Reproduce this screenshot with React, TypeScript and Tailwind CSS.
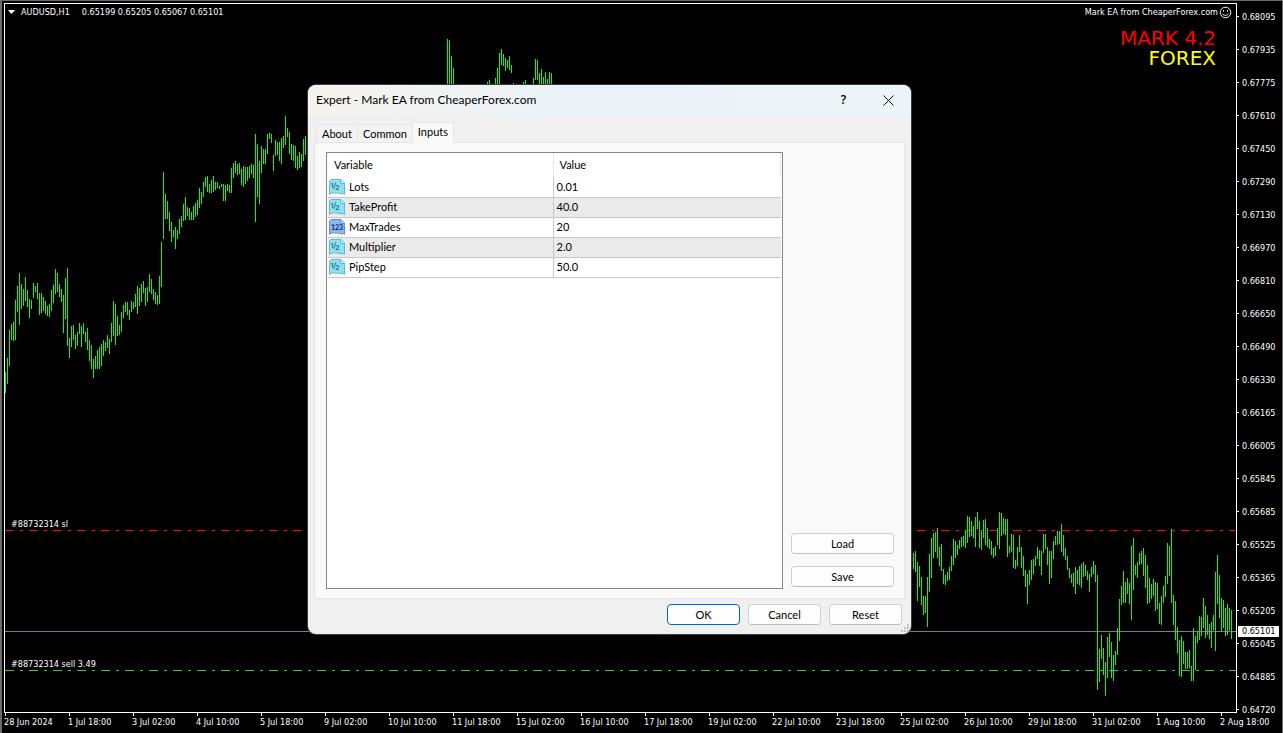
import { useState } from 'react';
import clsx from 'clsx';

const PRICES = [
  '0.68095', '0.67935', '0.67775', '0.67610', '0.67450', '0.67290', '0.67130', '0.66970',
  '0.66810', '0.66650', '0.66490', '0.66330', '0.66165', '0.66005', '0.65845', '0.65685',
  '0.65525', '0.65365', '0.65205', '0.65045', '0.64885', '0.64720',
];

const DATES = [
  '28 Jun 2024', '1 Jul 18:00', '3 Jul 02:00', '4 Jul 10:00', '5 Jul 18:00', '9 Jul 02:00', '10 Jul 10:00',
  '11 Jul 18:00', '15 Jul 02:00', '16 Jul 10:00', '17 Jul 18:00', '19 Jul 02:00', '22 Jul 10:00', '23 Jul 18:00',
  '25 Jul 02:00', '26 Jul 10:00', '29 Jul 18:00', '31 Jul 02:00', '1 Aug 10:00', '2 Aug 18:00',
];

// Each run starts at `x` and holds one "high-low" pair per bar, 2 units apart
const RUNS = [
  {
    x: 5,
    bars:
      '372-393 358-384 330-366 324-340 322-341 300-340 286-312 273-325 284-309 289-306 277-301 290-307 299-318 300-309 283-298 286-292 283-299 293-315 293-313 297-311 ' +
      '301-314 306-316 304-317 290-311 285-303 269-294 273-292 284-297 289-302 295-333 278-319 268-346 338-358 326-347 325-340 335-349 332-346 323-334 326-347 323-334 ' +
      '332-342 328-350 340-361 345-369 359-378 356-369 350-369 347-369 344-366 340-356 342-351 335-348 339-354 323-342 301-336 304-345 316-336 325-335 312-332 305-318 ' +
      '302-312 302-315 310-320 301-312 302-309 294-307 286-314 288-306 284-302 281-293 288-306 287-302 274-292 279-294 289-300 292-304 295-305 276-304 242-287 172-239 ' +
      '194-219 201-219 212-231 222-242 230-237 227-249 230-239 219-234 216-227 204-221 197-220 207-216 208-220 212-220 206-220 203-217 200-215 188-208 192-204 182-197 ' +
      '177-187 176-192 184-193 180-193 176-192 182-190 182-188 186-189 184-187 184-201 185-201 184-191 185-193 168-193 163-178 161-173 164-175 163-174 169-185 166-187 ' +
      '167-184 167-181 166-178 164-174 165-178 134-222 144-197 161-204 146-173 149-164 149-164 134-154 133-139 134-143 155-171 140-156 142-155 142-161 138-164 136-148 ' +
      '116-145 128-137 132-154 144-160 145-161 146-168 156-170 152-168 154-167 139-161 136-155 139-152',
  },
  { x: 447, bars: '39-90 40-90 56-90 68-90' },
  { x: 487, bars: '82-90 80-90' },
  { x: 495, bars: '78-90 68-90 53-90 49-65 54-66 58-71 60-68 56-70 65-73 83-90' },
  { x: 523, bars: '82-90 80-90 84-90 84-90' },
  { x: 533, bars: '78-90 59-80 60-80 73-90 69-90 77-90 72-90 79-90 72-90 73-90' },
  {
    x: 911,
    bars:
      '545-570 553-569 551-572 562-601 566-587 577-605 596-615 596-613 577-627 554-592 538-578 533-558 532-552 528-558 547-566 544-571 569-584 575-585 572-581 567-580 ' +
      '556-571 539-565 541-558 545-555 540-549 537-547 536-546 530-548 516-543 517-537 521-536 526-538 517-547 512-529 521-548 531-550 520-538 519-545 528-547 539-549 ' +
      '541-555 548-558 546-556 528-545 512-549 513-536 518-534 519-535 519-557 546-553 534-552 535-568 560-569 547-566 535-552 547-568 556-576 570-587 574-604 570-585 ' +
      '560-580 559-574 556-566 547-559 550-566 551-575 534-553 534-549 547-565 551-584 551-578 541-559 536-545 531-545 531-544 524-552 535-556 548-560 556-570 568-578 ' +
      '574-583 573-587 567-594 570-584 566-585 564-588 562-577 565-576 571-580 574-592 567-577 561-574 565-582 575-690 649-682 635-659 648-675 662-696 637-678 633-657 ' +
      '642-678 655-681 651-665 628-655 599-641 586-605 571-603 582-603 578-594 583-604 546-620 538-590 565-575 562-578 553-565 551-564 548-576 555-588 565-604 578-603 ' +
      '584-599 579-596 582-611 583-609 603-624 596-625 586-603 576-597 543-584 546-576 529-603 595-625 601-640 627-653 640-676 636-677 641-664 652-669 652-669 650-668 ' +
      '666-681 628-681 636-670 631-643 616-640 617-636 598-628 606-638 615-635 624-639 622-648 615-630 572-651 555-604 575-618 598-632 600-628 608-636 604-635 608-630 610-639',
  },
];

const BARS_PATH = RUNS.map(({ x, bars }) =>
  bars
    .split(' ')
    .map((bar, i) => {
      const [high, low] = bar.split('-');
      return `M${x + i * 2 + 0.5} ${high}V${low}`;
    })
    .join(''),
).join('');

const INPUTS = [
  { name: 'Lots', value: '0.01', type: 'double' },
  { name: 'TakeProfit', value: '40.0', type: 'double' },
  { name: 'MaxTrades', value: '20', type: 'int' },
  { name: 'Multiplier', value: '2.0', type: 'double' },
  { name: 'PipStep', value: '50.0', type: 'double' },
];

const TABS = ['About', 'Common', 'Inputs'];

function TypeIcon({ type }: { type: string }) {
  const isInt = type === 'int';
  const edge = isInt ? '#5a90cc' : '#5fbccb';
  return (
    <svg width="16" height="16" viewBox="0 0 16 16" aria-hidden="true" className="shrink-0">
      <path
        d="M2 .5H12L15.5 4V15.5L14 14L12.5 15.5L11 13.5L9.5 15L8 13.5L6.5 14.5L5 13L3.5 14.5L2 14L.5 15.5V2Z"
        fill={isInt ? '#8bb8f0' : '#8fdfee'}
        stroke={edge}
      />
      <path d="M11.5 .5V4.5H15.5" fill={isInt ? '#b9d6fa' : '#c4f2f8'} stroke={edge} />
      {isInt ? (
        <text x="8" y="11" textAnchor="middle" fontSize="7" fontWeight="700" fill="#0d2f66">123</text>
      ) : (
        <g fill="#1f7184" fontFamily="Roboto, sans-serif" fontSize="8" fontWeight="500">
          <text x="1" y="9">1</text>
          <path d="M4.5 10L7 3" stroke="#1f7184" strokeWidth=".8" />
          <text x="6" y="11">2</text>
        </g>
      )}
    </svg>
  );
}

function Chart() {
  return (
    <section className="relative mt-0.5 min-w-0 flex-1 border border-white">
      <svg
        className="absolute inset-0 h-full w-full"
        viewBox="5 4 1231 708"
        preserveAspectRatio="none"
        shapeRendering="crispEdges"
        fill="none"
        aria-hidden="true"
      >
        <path d="M5 631.5H1236" stroke="#708090" />
        <path d="M5 530.5H1236" stroke="#ff0000" strokeDasharray="9 6 3 6" />
        <path d="M5 670.5H1236" stroke="#32cd32" strokeDasharray="9 6 3 6" />
        <path d={BARS_PATH} stroke="#00ff00" />
      </svg>

      <div className="relative flex items-start justify-between pt-0.5 pr-1 pl-[3px]">
        <div className="flex h-3 items-center gap-3">
          <div className="flex items-center gap-1.5">
            <svg width="7" height="4" viewBox="0 0 7 4" aria-hidden="true">
              <path d="M0 0H7L3.5 4Z" fill="#fff" />
            </svg>
            <span>AUDUSD,H1</span>
          </div>
          <span>0.65199 0.65205 0.65067 0.65101</span>
        </div>
        <div className="flex h-3 items-center gap-px">
          <span>Mark EA from CheaperForex.com</span>
          <svg width="13" height="13" viewBox="0 0 13 13" fill="none" stroke="#fff" aria-hidden="true">
            <circle cx="6.5" cy="6.5" r="5.3" />
            <path d="M3.5 7.5C4.5 10 8.5 10 9.5 7.5" />
            <path d="M4.5 4V5.5M8.5 4V5.5" />
          </svg>
        </div>
      </div>

      <div className="relative flex flex-col items-end pt-2.5 pr-5 font-['DejaVu_Sans',sans-serif] text-[20px] leading-5">
        <span className="text-[#ff0000]">MARK 4.2</span>
        <span className="text-[#ffff00]">FOREX</span>
      </div>

      <span className="absolute top-[514px] left-1.5">#88732314 sl</span>
      <span className="absolute top-[654px] left-1.5">#88732314 sell 3.49</span>
    </section>
  );
}

function PriceAxis() {
  return (
    <aside className="relative w-[45px] shrink-0">
      {PRICES.map((price) => (
        <div key={price} className="flex h-[33px] items-center gap-[3px] pb-0.5">
          <span className="h-px w-0.5 bg-white" />
          <span>{price}</span>
        </div>
      ))}
      <span className="absolute top-[625px] left-px h-[11px] w-[41px] bg-white pl-1 leading-[11px] text-black">
        0.65101
      </span>
    </aside>
  );
}

function DialogButton({ children, className }: { children: string; className?: string }) {
  return (
    <button
      type="button"
      className={clsx('h-[21px] rounded border bg-[#fdfdfd] leading-4', className ?? 'border-[#d0d0d0] border-b-[#bcbcbc]')}
    >
      {children}
    </button>
  );
}

function ExpertDialog() {
  const [activeTab, setActiveTab] = useState('Inputs');

  return (
    <div
      role="dialog"
      aria-labelledby="expert-title"
      className="absolute top-[84px] left-[306px] flex w-[603px] flex-col overflow-hidden rounded-lg bg-[#f0f0f0] font-[Lato,sans-serif] text-[11px] leading-4 text-black ring-1 ring-[#3c3c3c]"
    >
      <header className="flex h-[30px] items-center bg-linear-to-r from-[#f6f3ee] via-[#ecf3f8] via-40% to-[#ecf4f8] pl-2 text-[12px]">
        <h1 id="expert-title" className="flex-1">Expert - Mark EA from CheaperForex.com</h1>
        <button type="button" aria-label="Help" className="h-[30px] w-[45px] font-['Open_Sans',sans-serif] font-semibold">?</button>
        <button type="button" aria-label="Close" className="flex h-[30px] w-[45px] items-center justify-center">
          <svg width="11" height="11" viewBox="0 0 11 11" stroke="#111" aria-hidden="true">
            <path d="M.5 .5L10.5 10.5M10.5 .5L.5 10.5" />
          </svg>
        </button>
      </header>

      <div className="px-1.5 pt-[7px]">
        <div role="tablist" className="relative z-10 -mb-px flex items-end pl-0.5">
          {TABS.map((tab) => {
            const isActive = tab === activeTab;
            return (
              <button
                key={tab}
                type="button"
                role="tab"
                aria-selected={isActive}
                onClick={() => setActiveTab(tab)}
                className={clsx(
                  'border border-[#e5e5e5] px-[5px]',
                  isActive ? 'h-[21px] border-b-[#f9f9f9] bg-[#f9f9f9] pb-0.5' : 'h-[19px] border-r-0 bg-[#f3f3f3]',
                )}
              >
                {tab}
              </button>
            );
          })}
        </div>

        <div className="flex justify-between border border-[#e5e5e5] bg-[#f9f9f9] pt-[9px] pr-2.5 pb-[9px] pl-[11px]">
          <div className="h-[437px] w-[457px] border border-[#828790] bg-white px-px">
            <table className="w-full table-fixed border-collapse text-left">
              <colgroup>
                <col className="w-[225px]" />
                <col />
              </colgroup>
              <thead>
                <tr className="h-6">
                  <th className="border-r border-[#e5e5e5] pl-1.5 font-normal">Variable</th>
                  <th className="border-r border-[#e5e5e5] pl-1.5 font-normal">Value</th>
                </tr>
              </thead>
              <tbody>
                {INPUTS.map((input) => (
                  <tr key={input.name} className="h-5 border-b border-[#c8c8c8] even:bg-[#eaeaea]">
                    <td className="border-r border-[#c8c8c8] p-0">
                      <div className="flex items-center gap-1 pl-px">
                        <TypeIcon type={input.type} />
                        {input.name}
                      </div>
                    </td>
                    <td className="py-0 pl-[3px]">{input.value}</td>
                  </tr>
                ))}
              </tbody>
            </table>
          </div>

          <div className="flex w-[103px] flex-col justify-end gap-3 pb-0.5">
            <DialogButton>Load</DialogButton>
            <DialogButton>Save</DialogButton>
          </div>
        </div>
      </div>

      <footer className="grid grid-cols-[73px_73px_73px] justify-end gap-2 pt-[5px] pr-[9px] pb-[9px]">
        <DialogButton className="border-[#0067c0]">OK</DialogButton>
        <DialogButton>Cancel</DialogButton>
        <DialogButton>Reset</DialogButton>
      </footer>

      <svg width="8" height="8" viewBox="0 0 8 8" fill="#bfbfbf" className="absolute right-0.5 bottom-0.5" aria-hidden="true">
        <path d="M6 0h2v2H6zM3 3h2v2H3zM6 3h2v2H6zM0 6h2v2H0zM3 6h2v2H3zM6 6h2v2H6z" />
      </svg>
    </div>
  );
}

export default function App() {
  return (
    <main className="relative flex h-screen flex-col overflow-hidden border-t border-r border-l-2 border-[#6b6b6b] bg-black pl-0.5 font-['DejaVu_Sans_Condensed','DejaVu_Sans',sans-serif] text-[9px] leading-3 text-white">
      <div className="flex min-h-0 flex-1">
        <Chart />
        <PriceAxis />
      </div>

      <footer className="flex h-5 shrink-0 overflow-hidden">
        {DATES.map((date) => (
          <div key={date} className="w-16 shrink-0 whitespace-nowrap">
            <span className="ml-px block h-[3px] w-px bg-white" />
            <span>{date}</span>
          </div>
        ))}
      </footer>

      <ExpertDialog />
    </main>
  );
}
